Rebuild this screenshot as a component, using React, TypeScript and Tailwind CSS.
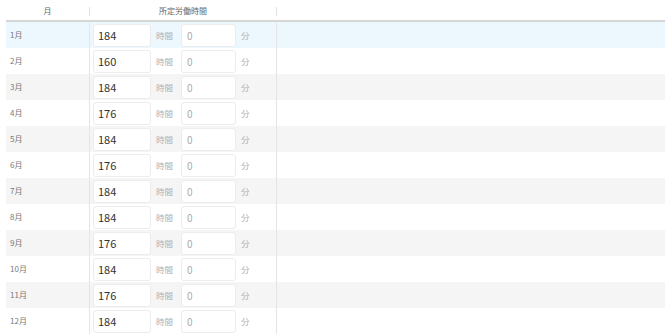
import React from 'react';

const rows = [
  { m: '1月', h: '184' },
  { m: '2月', h: '160' },
  { m: '3月', h: '184' },
  { m: '4月', h: '176' },
  { m: '5月', h: '184' },
  { m: '6月', h: '176' },
  { m: '7月', h: '184' },
  { m: '8月', h: '184' },
  { m: '9月', h: '176' },
  { m: '10月', h: '184' },
  { m: '11月', h: '176' },
  { m: '12月', h: '184' },
];

export default function App() {
  return (
    <div
      className="w-[670px] h-[334px] overflow-hidden bg-white pl-[6px] pr-[5px]"
      style={{ fontFamily: '"Noto Sans CJK JP", "Noto Sans", sans-serif' }}
    >
      <div className="flex h-[22px] items-center border-b-2 border-[#d6d6d6] text-[8px] text-[#666] pt-[2px]">
        <div className="w-[83px] text-center">月</div>
        <div className="w-[187px] h-[9px] border-l border-[#e2e2e2] flex items-center justify-center">所定労働時間</div>
        <div className="flex-1 h-[9px] border-l border-[#e2e2e2]"></div>
      </div>
      {rows.map((r, i) => (
        <div
          key={r.m}
          className={
            'flex h-[26px] items-center ' +
            (i === 0 ? 'bg-[#ecf7fe]' : i % 2 === 0 ? 'bg-[#f5f5f5]' : 'bg-white')
          }
        >
          <div className="w-[83px] pl-[4px] text-[8px] text-[#777]">{r.m}</div>
          <div className="w-[187px] h-full border-l border-[#e4e4e4] flex items-center pl-[3px]">
            <div className="w-[58px] h-[23px] bg-white border border-[#ececec] rounded-[3px] flex items-center pl-[4px] text-[11px] text-[#333]">
              {r.h}
            </div>
            <span className="ml-[5px] w-[25px] text-[8.5px] text-[#b0b0b0]">時間</span>
            <div className="w-[55px] h-[23px] bg-white border border-[#ececec] rounded-[3px] flex items-center pl-[5px] text-[10px] text-[#aaa]">
              0
            </div>
            <span className="ml-[5px] text-[8.5px] text-[#b0b0b0]">分</span>
          </div>
          <div className="flex-1 h-full border-l border-[#e4e4e4]"></div>
        </div>
      ))}
    </div>
  );
}
